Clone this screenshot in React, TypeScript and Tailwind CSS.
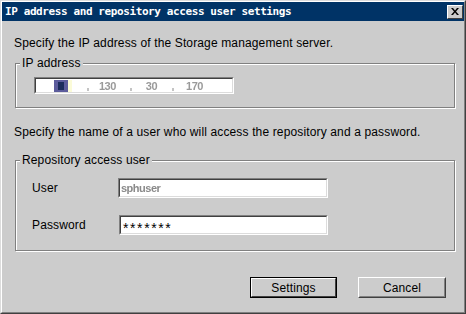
import React from "react";

const sans = { fontFamily: '"Liberation Sans", Arial, sans-serif' };

function Sunken({ className, children }: { className: string; children?: React.ReactNode }) {
  return (
    <div className={`border border-t-[#808080] border-l-[#808080] border-b-white border-r-white ${className}`}>
      <div className="w-full h-full border border-t-[#404040] border-l-[#404040] border-b-[#dcdcdc] border-r-[#dcdcdc] bg-white flex items-center overflow-hidden">
        {children}
      </div>
    </div>
  );
}

function Group({ label, className, children }: { label: string; className: string; children?: React.ReactNode }) {
  return (
    <div className={`relative border border-[#808080] shadow-[1px_1px_0_white,inset_1px_1px_0_white] ${className}`}>
      <span className="absolute left-[4px] top-[-8px] bg-[#cccccc] px-[2px] text-[12px] leading-[14px] text-black">
        {label}
      </span>
      {children}
    </div>
  );
}

export default function App() {
  return (
    <div
      className="w-[466px] h-[314px] bg-[#cccccc] border border-t-[#dcdcdc] border-l-[#dcdcdc] border-b-[#404040] border-r-[#404040]"
      style={sans}
    >
      <div className="w-full h-full border border-t-white border-l-white border-b-[#808080] border-r-[#808080] flex flex-col">
        {/* Title bar */}
        <div className="h-[19px] bg-[#003366] flex items-center justify-between pl-[3px] pr-[1px]">
          <span
            className="text-white font-bold text-[11px] leading-[19px] tracking-[-0.4px] whitespace-nowrap"
            style={{ fontFamily: '"DejaVu Sans Mono", "Liberation Mono", monospace' }}
          >
            IP address and repository access user settings
          </span>
          <div className="w-[16px] h-[14px] bg-[#cccccc] border border-t-white border-l-white border-b-[#404040] border-r-[#404040] flex items-center justify-center">
            <svg width="8" height="7" viewBox="0 0 8 7">
              <path d="M0 0h2l2 2.5L6 0h2L5 3.5 8 7H6L4 4.5 2 7H0l3-3.5z" fill="black" />
            </svg>
          </div>
        </div>

        {/* Content */}
        <div className="flex flex-col pl-[13px] pt-[15px] text-[12px] leading-[14px] tracking-[0.14px] text-black">
          <p className="ml-[-1px]">Specify the IP address of the Storage management server.</p>

          <Group label="IP address" className="mt-[13px] w-[440px] h-[45px]">
            <div className="pl-[18px] pt-[13px]">
              <Sunken className="w-[200px] h-[17px]">
                <div className="flex items-center h-full pl-[18px] text-[11px] text-[#9a9a9a]">
                  <span className="w-[14px] h-[12px] bg-[#5c5c9c] flex items-center justify-center">
                    <span className="w-[6px] h-[8px] bg-[#1c2c5c]" />
                  </span>
                  <span className="w-[4px] h-[12px] bg-[#fbfbd8]" />
                  <span className="ml-[15px] w-[2px] h-[3px] bg-[#c4c4c4] self-end mb-[1px]" />
                  <span className="ml-[10px] blur-[0.6px] font-bold tracking-[-0.5px]">130</span>
                  <span className="ml-[14px] w-[2px] h-[3px] bg-[#c4c4c4] self-end mb-[1px]" />
                  <span className="ml-[14px] blur-[0.6px] font-bold tracking-[-0.5px]">30</span>
                  <span className="ml-[15px] w-[2px] h-[3px] bg-[#c4c4c4] self-end mb-[1px]" />
                  <span className="ml-[12px] blur-[0.6px] font-bold tracking-[-0.5px]">170</span>
                </div>
              </Sunken>
            </div>
          </Group>

          <p className="mt-[17px] ml-[-1px]">
            Specify the name of a user who will access the repository and a password.
          </p>

          <Group label="Repository access user" className="mt-[21px] w-[440px] h-[91px]">
            <div className="flex flex-col pt-[17px] pl-[16px] gap-[17px]">
              <div className="flex items-center">
                <span className="w-[86px]">User</span>
                <Sunken className="w-[210px] h-[20px]">
                  <span className="pl-[1px] text-[11px] font-bold text-[#8a8a8a] blur-[0.7px] tracking-[-0.5px]">sphuser</span>
                </Sunken>
              </div>
              <div className="flex items-center">
                <span className="w-[87px]">Password</span>
                <Sunken className="w-[209px] h-[20px]">
                  <span className="pl-[2px] text-[14px] leading-[14px] pt-[5px] tracking-[1.6px]">*******</span>
                </Sunken>
              </div>
            </div>
          </Group>

          <div className="mt-[26px] flex gap-[21px] pl-[235px]">
            <div className="w-[87px] h-[21px] border border-black">
              <div className="w-full h-full border border-t-white border-l-white border-b-[#404040] border-r-[#404040] flex items-center justify-center">
                <span>Settings</span>
              </div>
            </div>
            <div className="w-[88px] h-[21px] border border-t-white border-l-white border-b-[#404040] border-r-[#404040]">
              <div className="w-full h-full border border-t-[#cccccc] border-l-[#cccccc] border-b-[#808080] border-r-[#808080] flex items-center justify-center">
                <span>Cancel</span>
              </div>
            </div>
          </div>
        </div>
      </div>
    </div>
  );
}
